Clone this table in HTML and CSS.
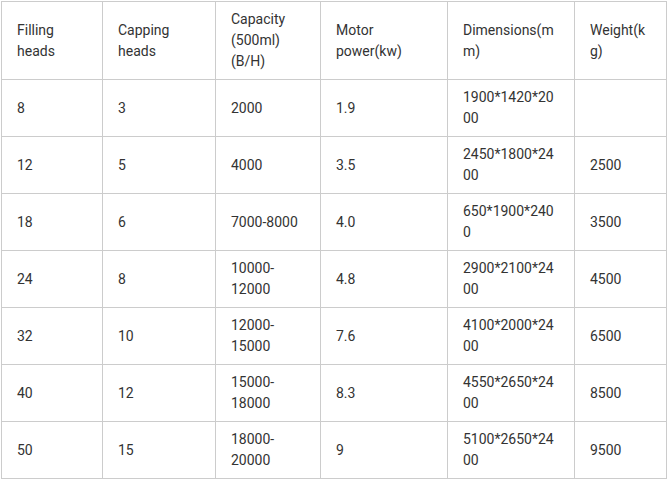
FILE: index.html
```html
<!DOCTYPE html>
<html>
<head>
<meta charset="utf-8">
<link rel="stylesheet" href="styles.css">
</head>
<body>
<div class="wrap">
<table class="spec">
<colgroup>
<col class="c1"><col class="c2"><col class="c3"><col class="c4"><col class="c5"><col class="c6">
</colgroup>
<tbody>
<tr class="head"><td>Filling heads</td><td>Capping heads</td><td>Capacity (500ml) (B/H)</td><td>Motor power(kw)</td><td>Dimensions(mm)</td><td>Weight(kg)</td></tr>
<tr><td>8</td><td>3</td><td>2000</td><td>1.9</td><td>1900*1420*2000</td><td></td></tr>
<tr><td>12</td><td>5</td><td>4000</td><td>3.5</td><td>2450*1800*2400</td><td>2500</td></tr>
<tr><td>18</td><td>6</td><td>7000-8000</td><td>4.0</td><td>650*1900*2400</td><td>3500</td></tr>
<tr><td>24</td><td>8</td><td>10000-12000</td><td>4.8</td><td>2900*2100*2400</td><td>4500</td></tr>
<tr><td>32</td><td>10</td><td>12000-15000</td><td>7.6</td><td>4100*2000*2400</td><td>6500</td></tr>
<tr><td>40</td><td>12</td><td>15000-18000</td><td>8.3</td><td>4550*2650*2400</td><td>8500</td></tr>
<tr><td>50</td><td>15</td><td>18000-20000</td><td>9</td><td>5100*2650*2400</td><td>9500</td></tr>
</tbody>
</table>
</div>
</body>
</html>
```
FILE: styles.css
```css
html, body {
  margin: 0;
  padding: 0;
  background: #fff;
}
.wrap {
  padding: 1px 0 0 1px;
}
.spec {
  border-collapse: collapse;
  table-layout: fixed;
  width: 665px;
  font-family: Roboto, "Liberation Sans", sans-serif;
  font-size: 14px;
  line-height: 21px;
  color: #333;
}
.spec td {
  border: 1px solid #ccc;
  padding: 7px 15px;
  vertical-align: middle;
  text-align: left;
  overflow-wrap: anywhere;
}
.c1 { width: 101px; }
.c2 { width: 113px; }
.c3 { width: 105px; }
.c4 { width: 127px; }
.c5 { width: 127px; }
.c6 { width: 92px; }
```
